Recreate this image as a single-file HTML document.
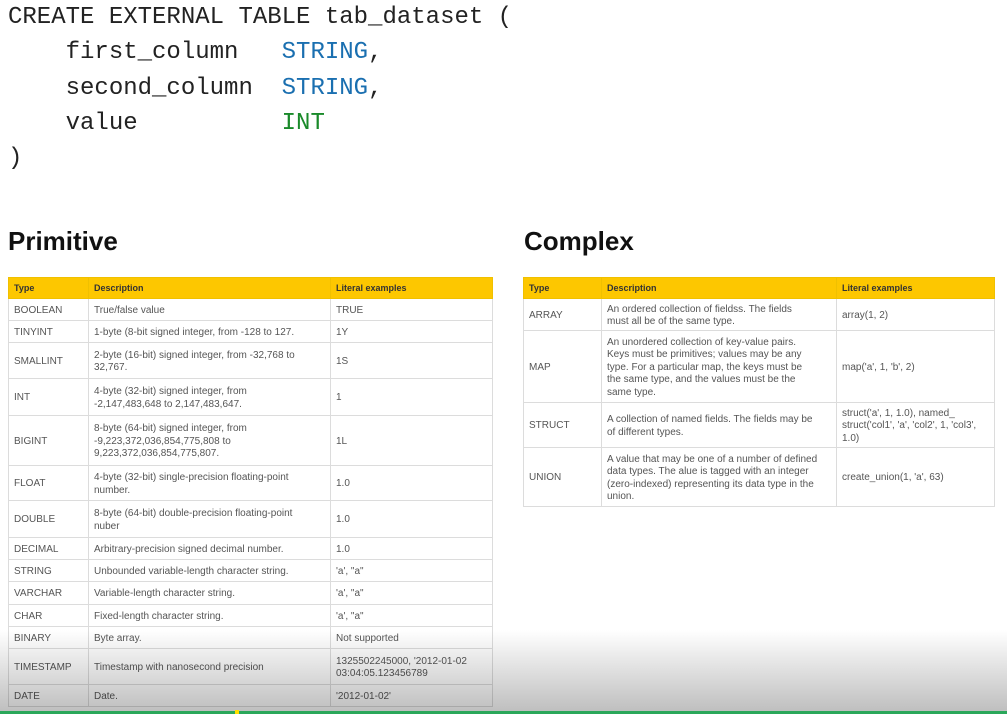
<!DOCTYPE html>
<html><head><meta charset="utf-8"><style>
*{margin:0;padding:0;box-sizing:border-box}
body{width:1007px;height:714px;background:#fff;position:relative;overflow:hidden;font-family:"Liberation Sans",sans-serif}
pre{position:absolute;left:8px;top:0;font-family:"Liberation Mono",monospace;font-size:24px;line-height:35.3px;color:#222}
.b{color:#1a6fb0}.g{color:#1a8a2a}
h2{position:absolute;top:226px;font-size:26px;font-weight:bold;color:#111}
table{position:absolute;border-collapse:collapse;font-size:10px;color:#555;line-height:12.5px;table-layout:fixed}
td,th{border:1px solid #dcdcdc;padding:3px 5px 0 5px;vertical-align:middle;text-align:left;white-space:nowrap;overflow:hidden}
th{background:#fdc700;color:#333;font-weight:bold;height:21px;border-color:#f0c000;font-size:9px;padding-top:0}
.shade{position:absolute;left:0;right:0;top:630px;height:81px;background:linear-gradient(rgba(0,0,0,0),rgba(0,0,0,0.25))}
.bar{position:absolute;left:0;right:0;top:711px;height:3px;background:#2aa75a}
.mk{position:absolute;left:235px;top:710px;width:4px;height:4px;background:#ffe000}
</style></head><body>
<pre>CREATE EXTERNAL TABLE tab_dataset (
    first_column   <span class="b">STRING</span>,
    second_column  <span class="b">STRING</span>,
    value          <span class="g">INT</span>
)</pre>
<h2 style="left:8px">Primitive</h2>
<h2 style="left:524px">Complex</h2>
<table style="left:8px;top:277px;width:485px">
<colgroup><col style="width:80px"><col style="width:242px"><col></colgroup>
<tr><th>Type</th><th>Description</th><th>Literal examples</th></tr>
<tr style="height:22px"><td>BOOLEAN</td><td>True/false value</td><td>TRUE</td></tr>
<tr style="height:22px"><td>TINYINT</td><td>1-byte (8-bit signed integer, from -128 to 127.</td><td>1Y</td></tr>
<tr style="height:36px"><td>SMALLINT</td><td>2-byte (16-bit) signed integer, from -32,768 to<br>32,767.</td><td>1S</td></tr>
<tr style="height:37px"><td>INT</td><td>4-byte (32-bit) signed integer, from<br>-2,147,483,648 to 2,147,483,647.</td><td>1</td></tr>
<tr style="height:50px"><td>BIGINT</td><td>8-byte (64-bit) signed integer, from<br>-9,223,372,036,854,775,808 to<br>9,223,372,036,854,775,807.</td><td>1L</td></tr>
<tr style="height:35px"><td>FLOAT</td><td>4-byte (32-bit) single-precision floating-point<br>number.</td><td>1.0</td></tr>
<tr style="height:37px"><td>DOUBLE</td><td>8-byte (64-bit) double-precision floating-point<br>nuber</td><td>1.0</td></tr>
<tr style="height:22px"><td>DECIMAL</td><td>Arbitrary-precision signed decimal number.</td><td>1.0</td></tr>
<tr style="height:22px"><td>STRING</td><td>Unbounded variable-length character string.</td><td>'a', "a"</td></tr>
<tr style="height:23px"><td>VARCHAR</td><td>Variable-length character string.</td><td>'a', "a"</td></tr>
<tr style="height:22px"><td>CHAR</td><td>Fixed-length character string.</td><td>'a', "a"</td></tr>
<tr style="height:22px"><td>BINARY</td><td>Byte array.</td><td>Not supported</td></tr>
<tr style="height:36px"><td>TIMESTAMP</td><td>Timestamp with nanosecond precision</td><td>1325502245000, '2012-01-02<br>03:04:05.123456789</td></tr>
<tr style="height:22px"><td>DATE</td><td>Date.</td><td>'2012-01-02'</td></tr>
</table>
<table style="left:523px;top:277px;width:472px">
<colgroup><col style="width:78px"><col style="width:235px"><col></colgroup>
<tr><th>Type</th><th>Description</th><th>Literal examples</th></tr>
<tr style="height:32px"><td>ARRAY</td><td>An ordered collection of fieldss. The fields<br>must all be of the same type.</td><td>array(1, 2)</td></tr>
<tr style="height:72px"><td>MAP</td><td>An unordered collection of key-value pairs.<br>Keys must be primitives; values may be any<br>type. For a particular map, the keys must be<br>the same type, and the values must be the<br>same type.</td><td>map('a', 1, 'b', 2)</td></tr>
<tr style="height:45px"><td>STRUCT</td><td>A collection of named fields. The fields may be<br>of different types.</td><td>struct('a', 1, 1.0), named_<br>struct('col1', 'a', 'col2', 1, 'col3',<br>1.0)</td></tr>
<tr style="height:59px"><td>UNION</td><td>A value that may be one of a number of defined<br>data types. The alue is tagged with an integer<br>(zero-indexed) representing its data type in the<br>union.</td><td>create_union(1, 'a', 63)</td></tr>
</table>
<div class="shade"></div><div class="bar"></div><div class="mk"></div>
</body></html>
